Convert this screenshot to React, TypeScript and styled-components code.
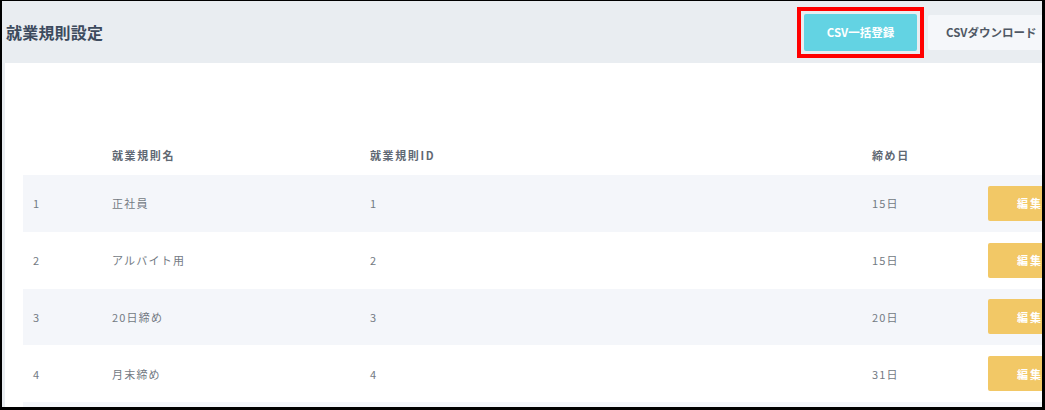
import React from "react";
import styled, { createGlobalStyle } from "styled-components";

const GlobalStyle = createGlobalStyle`
  html, body {
    margin: 0;
    padding: 0;
    background: #000;
  }
  body {
    font-family: "Noto Sans CJK JP", "Noto Sans", sans-serif;
  }
`;

type Rule = {
  no: number;
  name: string;
  id: string;
  closing: string;
};

const rules: Rule[] = [
  { no: 1, name: "正社員", id: "1", closing: "15日" },
  { no: 2, name: "アルバイト用", id: "2", closing: "15日" },
  { no: 3, name: "20日締め", id: "3", closing: "20日" },
  { no: 4, name: "月末締め", id: "4", closing: "31日" },
];

const App: React.FC = () => {
  return (
    <>
      <GlobalStyle />
      <Frame>
        <Page>
          <TopBar>
            <Title>就業規則設定</Title>
            <Actions>
              <Highlight>
                <PrimaryButton>CSV一括登録</PrimaryButton>
              </Highlight>
              <GhostButton>CSVダウンロード</GhostButton>
            </Actions>
          </TopBar>
          <Card>
            <HeadRow>
              <HeadCell />
              <HeadCell>就業規則名</HeadCell>
              <HeadCell>就業規則ID</HeadCell>
              <HeadCell>締め日</HeadCell>
              <HeadCell />
            </HeadRow>
            {rules.map((r, i) => (
              <Row key={r.no} $striped={i % 2 === 0}>
                <Cell>{r.no}</Cell>
                <Cell>{r.name}</Cell>
                <Cell>{r.id}</Cell>
                <Cell>{r.closing}</Cell>
                <Cell>
                  <EditButton>編集</EditButton>
                </Cell>
              </Row>
            ))}
            {/* next row is cut off by the screenshot edge */}
            <Row $striped />
          </Card>
        </Page>
      </Frame>
    </>
  );
};

export default App;

const Frame = styled.div`
  box-sizing: border-box;
  width: 1045px;
  height: 410px;
  border-style: solid;
  border-color: #000;
  border-width: 1px 3px 3px 2px;
  overflow: hidden;
  background: #e9edf1;
`;

const Page = styled.div`
  width: 1120px;
  display: flex;
  flex-direction: column;
`;

const TopBar = styled.div`
  height: 62px;
  display: flex;
  align-items: center;
  padding-left: 4px;
`;

const Title = styled.h1`
  width: 791px;
  margin: 0;
  font-size: 16px;
  font-weight: 700;
  color: #3d4b5e;
  letter-spacing: 0.2px;
`;

const Actions = styled.div`
  display: flex;
  align-items: center;
  gap: 4px;
`;

const Highlight = styled.span`
  display: flex;
  border: 4px solid #ff0000;
  padding: 3px;
`;

const PrimaryButton = styled.button`
  height: 37px;
  width: 113px;
  border: none;
  border-radius: 2px;
  background: #63d3e3;
  color: #fff;
  font-family: inherit;
  font-size: 11.5px;
  font-weight: 700;
`;

const GhostButton = styled.button`
  height: 35px;
  padding: 0 18px;
  border: none;
  border-radius: 2px;
  background: #f5f7fa;
  color: #4f5864;
  font-family: inherit;
  font-size: 11.5px;
  font-weight: 700;
`;

const Card = styled.div`
  background: #fff;
  margin-left: 3px;
  padding: 72px 0 0 18px;
  min-height: 400px;
`;

const grid = `
  display: grid;
  grid-template-columns: 89px 258px 502px 116px 1fr;
  align-items: center;
`;

const HeadRow = styled.div`
  ${grid}
  height: 40px;
`;

const HeadCell = styled.div`
  font-size: 11px;
  font-weight: 700;
  color: #5f6873;
  letter-spacing: 1.6px;

  &:first-child {
    padding-left: 10px;
  }
`;

const Row = styled.div<{ $striped: boolean }>`
  ${grid}
  height: 56.75px;
  background: ${(p) => (p.$striped ? "#f4f6fa" : "#fff")};
`;

const Cell = styled.div`
  font-size: 11px;
  color: #737a83;
  letter-spacing: 1.2px;

  &:first-child {
    padding-left: 10px;
  }
`;

const EditButton = styled.button`
  width: 84px;
  height: 35px;
  border: none;
  border-radius: 2px;
  background: #f2c866;
  color: #fff;
  font-family: inherit;
  font-size: 11px;
  font-weight: 700;
  letter-spacing: 2px;
`;
